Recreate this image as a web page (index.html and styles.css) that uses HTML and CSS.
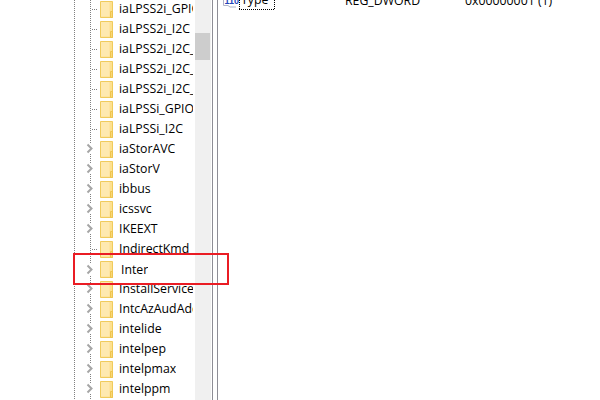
FILE: index.html
```html
<!DOCTYPE html>
<html lang="en">
<head>
<meta charset="utf-8">
<title>Registry Editor</title>
<link rel="stylesheet" href="styles.css">
</head>
<body>
<svg class="defs" width="0" height="0" aria-hidden="true">
  <symbol id="folder" viewBox="0 0 13 17">
    <path d="M.5.5H12.500V16.500H.5Z" fill="#fde08f" stroke="#f0cb5c"/>
    <path d="M1 1H9.500V15.500H1Z" fill="#fee9b0"/>
    <path d="M10.500 10.500H12.500V16.500H10.500Z" fill="#f8d675" stroke="#eec44e"/>
  </symbol>
  <symbol id="chev" viewBox="0 0 8 11">
    <path d="M2.500 1.500L6.500 5.500L2.500 9.500" fill="none" stroke="#a6a6a6" stroke-width="2"/>
  </symbol>
</svg>
<div class="app">
  <div class="tree">
    <div class="row leaf"><span class="twist"></span><svg class="folder"><use href="#folder"/></svg><span class="label">iaLPSS2i_GPIO2</span></div>
    <div class="row leaf"><span class="twist"></span><svg class="folder"><use href="#folder"/></svg><span class="label">iaLPSS2i_I2C</span></div>
    <div class="row leaf"><span class="twist"></span><svg class="folder"><use href="#folder"/></svg><span class="label">iaLPSS2i_I2C_BX</span></div>
    <div class="row leaf"><span class="twist"></span><svg class="folder"><use href="#folder"/></svg><span class="label">iaLPSS2i_I2C_CN</span></div>
    <div class="row leaf"><span class="twist"></span><svg class="folder"><use href="#folder"/></svg><span class="label">iaLPSS2i_I2C_GL</span></div>
    <div class="row leaf"><span class="twist"></span><svg class="folder"><use href="#folder"/></svg><span class="label">iaLPSSi_GPIO</span></div>
    <div class="row leaf"><span class="twist"></span><svg class="folder"><use href="#folder"/></svg><span class="label">iaLPSSi_I2C</span></div>
    <div class="row"><svg class="twist"><use href="#chev"/></svg><svg class="folder"><use href="#folder"/></svg><span class="label">iaStorAVC</span></div>
    <div class="row"><svg class="twist"><use href="#chev"/></svg><svg class="folder"><use href="#folder"/></svg><span class="label">iaStorV</span></div>
    <div class="row"><svg class="twist"><use href="#chev"/></svg><svg class="folder"><use href="#folder"/></svg><span class="label">ibbus</span></div>
    <div class="row"><svg class="twist"><use href="#chev"/></svg><svg class="folder"><use href="#folder"/></svg><span class="label">icssvc</span></div>
    <div class="row"><svg class="twist"><use href="#chev"/></svg><svg class="folder"><use href="#folder"/></svg><span class="label">IKEEXT</span></div>
    <div class="row leaf"><span class="twist"></span><svg class="folder"><use href="#folder"/></svg><span class="label">IndirectKmd</span></div>
    <div class="row row-edited"><svg class="twist"><use href="#chev"/></svg><svg class="folder"><use href="#folder"/></svg><span class="label">Inter</span></div>
    <div class="row"><svg class="twist"><use href="#chev"/></svg><svg class="folder"><use href="#folder"/></svg><span class="label">InstallService</span></div>
    <div class="row"><svg class="twist"><use href="#chev"/></svg><svg class="folder"><use href="#folder"/></svg><span class="label">IntcAzAudAddService</span></div>
    <div class="row"><svg class="twist"><use href="#chev"/></svg><svg class="folder"><use href="#folder"/></svg><span class="label">intelide</span></div>
    <div class="row"><svg class="twist"><use href="#chev"/></svg><svg class="folder"><use href="#folder"/></svg><span class="label">intelpep</span></div>
    <div class="row"><svg class="twist"><use href="#chev"/></svg><svg class="folder"><use href="#folder"/></svg><span class="label">intelpmax</span></div>
    <div class="row"><svg class="twist"><use href="#chev"/></svg><svg class="folder"><use href="#folder"/></svg><span class="label">intelppm</span></div>
  </div>
  <div class="scrollbar"><div class="thumb"></div></div>
  <div class="splitter"></div>
  <div class="values">
    <div class="value-row">
      <svg class="reg-icon" width="16" height="16" viewBox="0 0 16 16"><path d="M.5 6V11.500H5L7 13H13" fill="none" stroke="#aeb4c8"/><text x="1.500" y="10" class="reg-bits">110</text></svg>
      <span class="value-name">Type</span>
      <span class="value-type">REG_DWORD</span>
      <span class="value-data">0x00000001 (1)</span>
    </div>
  </div>
  <div class="highlight"></div>
</div>
</body>
</html>
```
FILE: styles.css
```css
html, body { margin: 0; height: 100%; background: #fff; }
.defs { position: absolute; }
.app {
  position: relative;
  display: flex;
  width: 600px;
  height: 400px;
  overflow: hidden;
  font-family: "Open Sans", "Noto Sans", sans-serif;
  font-size: 12.3px;
  color: #000;
}
.tree {
  width: 195px;
  flex: none;
  overflow: hidden;
  margin-top: -2px;
  padding: 0 2px 0 85px;
  box-sizing: border-box;
  background-image:
    repeating-linear-gradient(180deg, #808080 0 1px, transparent 1px 2px),
    repeating-linear-gradient(180deg, #808080 0 1px, transparent 1px 2px);
  background-size: 1px 100%, 1px 100%;
  background-repeat: no-repeat;
  background-position: 74px 0, 90px 0;
}
.row {
  height: 20px;
  display: flex;
  align-items: center;
  white-space: nowrap;
}
.leaf {
  background: repeating-linear-gradient(90deg, #808080 0 1px, transparent 1px 2px) 7px 11px / 6px 1px no-repeat;
}
.twist { width: 8px; height: 11px; flex: none; background: #fff; }
.leaf .twist { background: none; }
.folder { width: 13px; height: 17px; flex: none; margin: 2px 0 0 7px; }
.label { margin-left: 6px; overflow: hidden; }
.row-edited .label { margin: 2px 0 0 8px; }
.row-edited .twist { margin-top: 2px; }
.scrollbar { width: 16px; flex: none; background: #f0f0f0; }
.thumb { width: 15px; height: 27px; margin-top: 33px; background: #cdcdcd; }
.splitter {
  width: 6px;
  flex: none;
  margin-left: 1px;
  border-left: 1px solid #8e8e96;
  border-right: 1px solid #8e8e96;
  box-sizing: border-box;
}
.values { flex: 1; margin-top: -10px; }
.value-row { height: 20px; display: flex; align-items: center; padding-left: 5px; white-space: nowrap; }
.reg-icon { flex: none; margin-top: 4px; }
.reg-bits { font-size: 9px; font-weight: 700; fill: #2244bb; font-family: "Liberation Sans", sans-serif; }
.value-name {
  width: 106px;
  height: 20px;
  line-height: 20px;
  box-sizing: border-box;
  padding-left: 2px;
  background:
    repeating-linear-gradient(90deg, #000 0 1px, transparent 1px 2px) 0 100% / 36px 1px no-repeat,
    repeating-linear-gradient(180deg, #000 0 1px, transparent 1px 2px) 0 0 / 1px 100% no-repeat,
    repeating-linear-gradient(180deg, #000 0 1px, transparent 1px 2px) 35px 0 / 1px 100% no-repeat;
}
.value-type { width: 120px; }
.highlight {
  position: absolute;
  left: 73px;
  top: 253px;
  width: 152px;
  height: 28px;
  border: 2px solid #ea1c24;
  pointer-events: none;
}
```
